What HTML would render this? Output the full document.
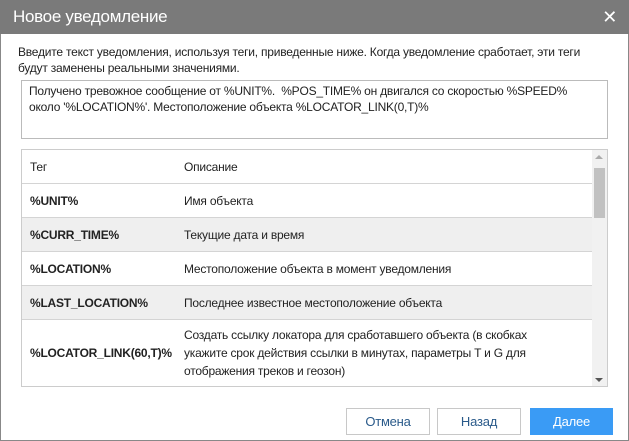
<!DOCTYPE html>
<html><head><meta charset="utf-8"><style>
*{box-sizing:border-box;margin:0;padding:0}
body{width:629px;height:441px;background:#fff;font-family:"Liberation Sans",Arial,sans-serif;font-size:12px;color:#222;letter-spacing:-0.22px;position:relative;overflow:hidden}
.frame{position:absolute;left:0;top:0;width:629px;height:441px;border:1px solid #888}
.hdr{position:absolute;left:0;top:0;width:629px;height:34px;background:#7a7a7a;color:#fff;font-size:17px;line-height:34px;padding-left:13px;letter-spacing:-0.3px}
.x{position:absolute;right:12px;top:0;font-size:18px;color:#fff;line-height:34px;font-weight:300}
.intro{position:absolute;left:18px;top:44px;width:610px;line-height:16px;white-space:nowrap}
.ta{position:absolute;left:21px;top:80px;width:587px;height:59px;border:1px solid #bbb;padding:2px 7px;line-height:16px;white-space:nowrap}
.tbl{position:absolute;left:21px;top:149px;width:587px;height:238px;border:1px solid #ccc;overflow:hidden}
.row{position:absolute;left:0;width:571px;border-bottom:1px solid #d4d4d4}
.row span{position:absolute;top:50%;transform:translateY(-50%)}
.t{left:8px;font-weight:bold}
.d{left:162px;width:410px;line-height:18px;white-space:nowrap}
.g{background:#efefef}
.sb{position:absolute;right:0;top:0;width:15px;height:238px;background:#f1f1f1}
.thumb{position:absolute;left:2px;top:18px;width:11px;height:50px;background:#c1c1c1}
.btn{position:absolute;top:408px;height:27px;border:1px solid #c8c8c8;background:#fff;color:#2a5a8a;text-align:center;line-height:25px;font-size:13px}
</style></head><body>
<div class="frame"></div>
<div class="hdr">Новое уведомление<span class="x">✕</span></div>
<div class="intro">Введите текст уведомления, используя теги, приведенные ниже. Когда уведомление сработает, эти теги<br>будут заменены реальными значениями.</div>
<div class="ta">Получено тревожное сообщение от %UNIT%.&nbsp; %POS_TIME% он двигался со скоростью %SPEED%<br>около '%LOCATION%'. Местоположение объекта %LOCATOR_LINK(0,T)%</div>
<div class="tbl">
<div class="row" style="top:0;height:34px"><span class="t" style="font-weight:normal">Тег</span><span class="d">Описание</span></div>
<div class="row" style="top:34px;height:34px"><span class="t">%UNIT%</span><span class="d">Имя объекта</span></div>
<div class="row g" style="top:68px;height:34px"><span class="t">%CURR_TIME%</span><span class="d">Текущие дата и время</span></div>
<div class="row" style="top:102px;height:34px"><span class="t">%LOCATION%</span><span class="d">Местоположение объекта в момент уведомления</span></div>
<div class="row g" style="top:136px;height:34px"><span class="t">%LAST_LOCATION%</span><span class="d">Последнее известное местоположение объекта</span></div>
<div class="row" style="top:170px;height:67px"><span class="t">%LOCATOR_LINK(60,T)%</span><span class="d">Создать ссылку локатора для сработавшего объекта (в скобках<br>укажите срок действия ссылки в минутах, параметры T и G для<br>отображения треков и геозон)</span></div>
<div class="sb"><div style="position:absolute;left:3px;top:5px;border:4px solid transparent;border-bottom:4px solid #aaa;border-top:0"></div><div class="thumb"></div><div style="position:absolute;left:3px;top:228px;border:4px solid transparent;border-top:4px solid #555;border-bottom:0"></div></div>
</div>
<div class="btn" style="left:346px;width:84px">Отмена</div>
<div class="btn" style="left:437px;width:84px">Назад</div>
<div class="btn" style="left:530px;width:83px;background:#3a9bf5;border-color:#3a9bf5;color:#fff">Далее</div>
</body></html>
